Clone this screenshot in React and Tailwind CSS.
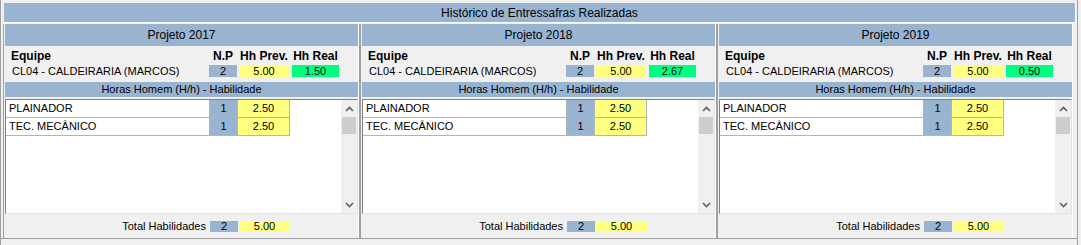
const projects = [
  { year: "2017", real: "1.50" },
  { year: "2018", real: "2.67" },
  { year: "2019", real: "0.50" },
];

const skills = [
  { name: "PLAINADOR", np: "1", hh: "2.50" },
  { name: "TEC. MECÂNICO", np: "1", hh: "2.50" },
];

function Chevron({ down = false }) {
  return (
    <svg width="9" height="6" viewBox="0 0 9 6" className="block">
      <polyline
        points={down ? "1,1 4.5,4.5 8,1" : "1,5 4.5,1.5 8,5"}
        fill="none"
        stroke="#606060"
        strokeWidth="1.6"
      />
    </svg>
  );
}

function ProjectPanel({ year, real, first }) {
  return (
    <div
      className={`flex h-[214px] flex-col border-r border-r-white pl-[1px] ${
        first ? "border-l border-l-[#a0a0a0]" : "border-l-2 border-l-[#a0a0a0]"
      }`}
    >
      <div className="w-[353px]">
        <div className="flex h-[22px] items-center justify-center bg-[#99b4d1] text-[12px]">
          Projeto {year}
        </div>

        <div className="h-[36px] pt-[3px]">
          <div className="flex h-[14px] items-center text-[12px] font-bold">
            <div className="flex-1 pl-[6px]">Equipe</div>
            <div className="w-[28px] text-center">N.P</div>
            <div className="ml-[2px] w-[50px] text-center">Hh Prev.</div>
            <div className="ml-[3px] w-[47px] text-center">Hh Real</div>
            <div className="w-[19px]" />
          </div>
          <div className="mt-[2px] flex h-[12px] items-center text-[11px]">
            <div className="flex-1 pl-[7px] leading-none">CL04 - CALDEIRARIA (MARCOS)</div>
            <div className="flex h-[12px] w-[28px] items-center justify-center bg-[#99b4d1] leading-none">2</div>
            <div className="ml-[2px] flex h-[12px] w-[50px] items-center justify-center bg-[#ffff80] leading-none">5.00</div>
            <div className="ml-[3px] flex h-[12px] w-[47px] items-center justify-center bg-[#00ff80] leading-none">{real}</div>
            <div className="w-[19px]" />
          </div>
        </div>

        <div className="flex h-[15px] items-center justify-center bg-[#99b4d1] text-[11px]">
          Horas Homem (H/h) - Habilidade
        </div>

        <div className="mt-[2px] flex h-[115px] border border-t-[#828282] border-l-[#828282] border-r-[#e3e3e3] border-b-[#e3e3e3] bg-white">
          <div className="flex-1 text-[11px]">
            {skills.map((s) => (
              <div key={s.name} className="flex h-[18px]">
                <div className="flex w-[204px] items-center border-r border-b border-[#b4b4b4] pl-[3px]">{s.name}</div>
                <div className="flex w-[28px] items-center justify-center border-r border-b border-[#b4b4b4] bg-[#99b4d1]">{s.np}</div>
                <div className="flex w-[52px] items-center justify-center border-r border-b border-[#b4b4b4] bg-[#ffff80]">{s.hh}</div>
              </div>
            ))}
          </div>
          <div className="flex w-[16px] flex-col bg-[#f0f0f0]">
            <div className="flex h-[17px] items-center justify-center">
              <Chevron />
            </div>
            <div className="h-[17px] mx-[1px] bg-[#cdcdcd]" />
            <div className="flex-1" />
            <div className="flex h-[17px] items-center justify-center">
              <Chevron down />
            </div>
          </div>
        </div>

        <div className="flex h-[24px] items-center justify-end pr-[68px] text-[11px]">
          <div className="mr-[4px]">Total Habilidades</div>
          <div className="flex h-[11px] w-[28px] items-center justify-center bg-[#99b4d1] leading-none">2</div>
          <div className="ml-[1px] flex h-[11px] w-[51px] items-center justify-center bg-[#ffff80] leading-none">5.00</div>
        </div>
      </div>
    </div>
  );
}

export default function App() {
  return (
    <div
      className="h-[245px] w-[1081px] overflow-hidden border-l border-[#a0a0a0] bg-[#f0f0f0] text-black"
      style={{ fontFamily: '"Liberation Sans", Arial, sans-serif' }}
    >
      <div className="w-[1077px] border-r border-[#a0a0a0]">
        <div className="pl-[3px] pt-[3px]">
          <div className="flex h-[20px] w-[1072px] items-center justify-center border-r border-b border-white bg-[#99b4d1] text-[12px]">
            Histórico de Entressafras Realizadas
          </div>
        </div>
        <div className="mt-[1px] flex pl-[2px]">
          {projects.map((p, i) => (
            <ProjectPanel key={p.year} {...p} first={i === 0} />
          ))}
        </div>
        <div className="h-[1px] bg-[#a0a0a0]" />
        <div className="h-[6px]" />
      </div>
    </div>
  );
}
